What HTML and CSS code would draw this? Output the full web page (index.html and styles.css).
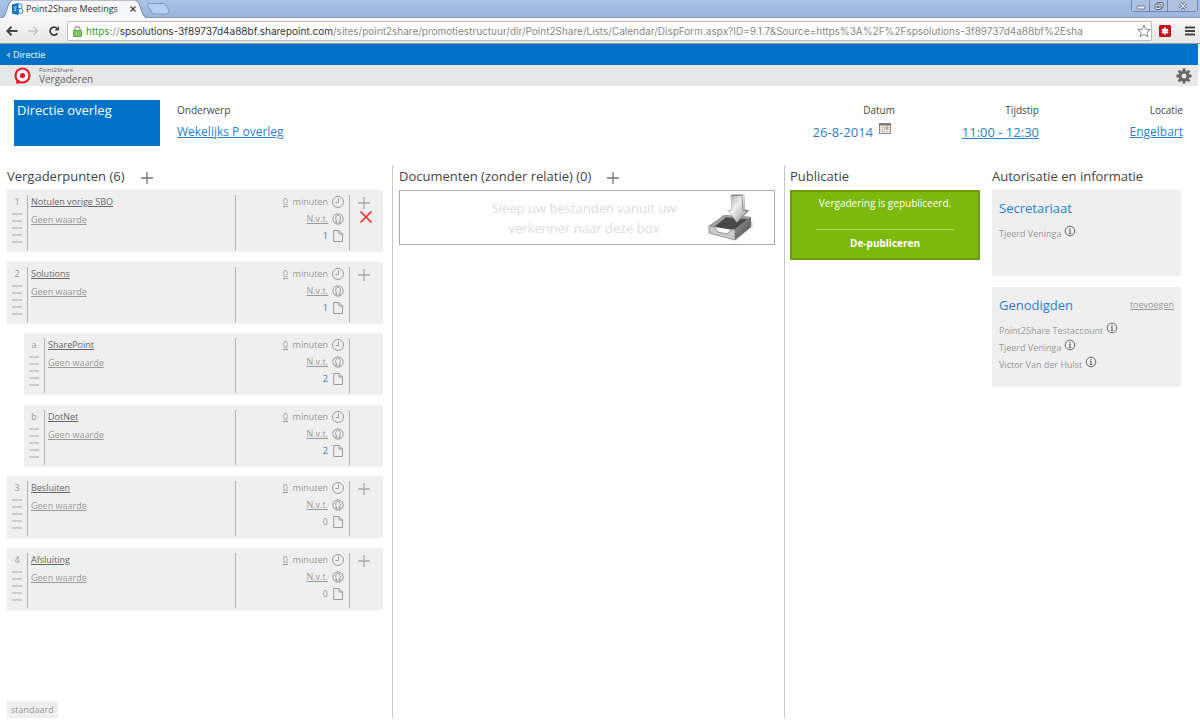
FILE: index.html
```html
<!DOCTYPE html>
<html lang="nl">
<head>
<meta charset="utf-8">
<title>Point2Share Meetings</title>
<link rel="stylesheet" href="styles.css">
</head>
<body>
<svg class="defs" aria-hidden="true">
  <symbol id="plus" viewBox="0 0 12 12"><path d="M6 0v12M0 6h12" fill="none" stroke="currentColor" stroke-width="1.3"/></symbol>
  <symbol id="cross" viewBox="0 0 12 12"><path d="M.5.5l11 11M11.5.5l-11 11" fill="none" stroke="currentColor" stroke-width="1.5"/></symbol>
  <symbol id="clock" viewBox="0 0 12 12"><g fill="none" stroke="currentColor" stroke-width=".9"><circle cx="6" cy="6" r="5.5"/><path d="M6.5 2.5v4H3.5"/></g></symbol>
  <symbol id="person" viewBox="0 0 12 12"><g fill="none" stroke="currentColor" stroke-width=".9"><circle cx="6" cy="6" r="5.2"/><path d="M2.8 9.8c0-1 1.5-1.3 1.7-2C3.300 6.500 3.200 2.300 6 2.300s2.700 4.200 1.500 5.500c.2.700 1.700 1 1.700 2M4.700 8v2.800M7.300 8v2.800"/></g></symbol>
  <symbol id="doc" viewBox="0 0 12 12"><path d="M1.700.5h5.300l3.500 3.500v7.500H1.700zM7 .5V4h3.500" fill="none" stroke="currentColor" stroke-width=".9"/></symbol>
  <symbol id="info" viewBox="0 0 12 12"><circle cx="6" cy="6" r="4.800" fill="none" stroke="currentColor"/><path d="M6 3v1.300M5 5.300h1v3.200M4.800 8.500h2.500" fill="none" stroke="currentColor" stroke-width="1.100"/></symbol>
  <symbol id="grip" viewBox="0 0 10 30"><path d="M0 1h10M0 8h10M0 15h10M0 22h10M0 29h10" fill="none" stroke="currentColor" stroke-width="1.200"/></symbol>
</svg>

<header class="browser">
  <div class="tabs">
    <div class="tab">
      <svg class="tab-shape" viewBox="0 0 146 18" preserveAspectRatio="none"><path d="M0 18C5 17 5 1 11 0H135C141 1 141 17 147 18" fill="#f6f7f9" stroke="#7185a8"/></svg>
      <svg class="favicon" viewBox="0 0 12 12"><circle cx="7.500" cy="3.300" r="2.600" fill="none" stroke="#2a86cc"/><circle cx="8.500" cy="8" r="2.500" fill="none" stroke="#2a86cc"/><path d="M0 1.500L6.500 0v12L0 10.500z" fill="#0f6fbd"/><path d="M4.600 4C3 3.100 1.900 4.400 3 5.500S4.500 8 2 7.800" stroke="#fff" fill="none"/></svg>
      <span class="tab-title">Point2Share Meetings</span>
      <button class="tab-close" aria-label="Sluiten"><svg viewBox="0 0 6 6"><path d="M.5.5l5 5M5.500.5l-5 5" stroke="#444" stroke-width="1.300"/></svg></button>
    </div>
    <button class="new-tab" aria-label="Nieuw tabblad"><svg viewBox="0 0 24 12"><path d="M3 .5H18q2 0 3 3l2 5q.5 2.500-2 2.500H8q-2 0-3-3L1.500 2.500Q1 .5 3 .5z" fill="#b6cdec" stroke="#7d99c4"/></svg></button>
    <div class="window-buttons">
      <button aria-label="Minimaliseren"><svg viewBox="0 0 10 8"><rect x="1" y="4" width="8" height="3" rx="1" fill="#eef3fa" stroke="#5a6883" stroke-width=".8"/></svg></button>
      <button aria-label="Herstellen"><svg viewBox="0 0 10 8"><g fill="#dfe8f5" stroke="#4b5872" stroke-width=".9"><rect x="3" y=".5" width="6" height="5.500" rx="1"/><rect x="1" y="2" width="6" height="5.500" rx="1"/><rect x="3" y="4" width="2" height="1.500"/></g></svg></button>
      <button class="wide" aria-label="Sluiten"><svg viewBox="0 0 10 8"><path d="M2 1l6 6M8 1L2 7" stroke="#54617b" stroke-width="3"/><path d="M2 1l6 6M8 1L2 7" stroke="#e8eef8" stroke-width="1.300"/></svg></button>
    </div>
  </div>
  <div class="toolbar">
    <button class="nav" aria-label="Terug"><svg viewBox="0 0 12 10"><path d="M1 5h10.500M5.500.8L1.300 5l4.200 4.200" fill="none" stroke="#444" stroke-width="2"/></svg></button>
    <button class="nav" aria-label="Vooruit"><svg viewBox="0 0 12 10"><path d="M1 5h9.500M6.500 1l4 4-4 4" fill="none" stroke="#c6c6c6" stroke-width="1.600"/></svg></button>
    <button class="nav" aria-label="Vernieuwen"><svg viewBox="0 0 12 10"><path d="M9.500 7.200A4 4 0 1 1 9 2.300" fill="none" stroke="#444" stroke-width="1.800"/><path d="M11 0v4.500H6.500z" fill="#444"/></svg></button>
    <div class="address">
      <svg class="lock" viewBox="0 0 9 11"><path d="M2 5V3a2.500 2.500 0 0 1 5 0v2" fill="none" stroke="#9a9a9a" stroke-width="1.300"/><rect x=".5" y="4.500" width="8" height="6" rx=".6" fill="#7fc763" stroke="#56a63e"/></svg>
      <div class="url" role="textbox" aria-label="Adres" tabindex="0"><span class="scheme">https:</span>//<span class="host">spsolutions-3f89737d4a88bf.sharepoint.com</span>/sites/point2share/promotiestructuur/dir/Point2Share/Lists/Calendar/DispForm.aspx?ID=9.1.7&amp;Source=https%3A%2F%2Fspsolutions-3f89737d4a88bf%2Esha</div>
      <button class="star" aria-label="Bladwijzer"><svg viewBox="0 0 14 14"><path d="M7 1l1.700 4.200 4.600.3-3.500 2.900 1.200 4.400L7 10.400l-4 2.400 1.200-4.400L.7 5.500l4.600-.3z" fill="#fff" stroke="#888"/></svg></button>
    </div>
    <button class="ext" aria-label="Extensie"><svg viewBox="0 0 12 12"><rect width="12" height="12" rx="1.500" fill="#c2121f"/><path d="M6 2.500v7M2.900 4.300l6.200 3.500M9.100 4.300L2.900 7.800" stroke="#fff" stroke-width="1.900"/></svg></button>
    <button class="menu" aria-label="Menu"><svg viewBox="0 0 10 10"><path d="M0 1.500h10M0 5h10M0 8.500h10" stroke="#444" stroke-width="2"/></svg></button>
  </div>
</header>

<nav class="suite-bar"><a href="#"><svg viewBox="0 0 4 6"><path d="M4 0v6L0 3z" fill="#8fb0cf"/></svg>Directie</a></nav>

<div class="app-bar">
  <svg class="logo" viewBox="0 0 17 17"><path d="M2 16.500l.6-4.500 4 4.500z" fill="#ea1c2c"/><circle cx="8.500" cy="8.500" r="7" fill="#fff" stroke="#ea1c2c" stroke-width="2.200"/><circle cx="8.500" cy="8.500" r="2.600" fill="#ea1c2c"/></svg>
  <div class="app-name"><small>Point2Share</small><span>Vergaderen</span></div>
  <button class="gear" aria-label="Instellingen"><svg viewBox="0 0 16 16"><g stroke="#666" stroke-width="3"><path d="M8 .5v3.500M8 12v3.500M.5 8h3.500M12 8h3.500M2.700 2.700l2.500 2.500M10.800 10.800l2.500 2.500M13.300 2.700l-2.500 2.500M5.200 10.800l-2.500 2.500"/></g><circle cx="8" cy="8" r="3.900" fill="none" stroke="#666" stroke-width="2.800"/></svg></button>
</div>

<main class="page">
  <section class="meeting">
    <h1>Directie overleg</h1>
    <dl class="subject"><dt>Onderwerp</dt><dd><a href="#">Wekelijks P overleg</a></dd></dl>
    <dl class="fact"><dt>Datum</dt><dd class="date numeric">26-8-2014<svg viewBox="0 0 12 11"><rect x=".5" y=".5" width="11" height="10" fill="#f4f4f4" stroke="#8a8a8a"/><path d="M0 1.500h12" stroke="#777" stroke-width="2"/><path d="M1 4.500h10M1 6.500h10M1 8.500h10M3.500 3v7M5.500 3v7M8.500 3v7" stroke="#c4c4c4" stroke-width=".7"/><circle cx="8" cy="5" r="1.800" fill="#f2a060"/></svg></dd></dl>
    <dl class="fact"><dt>Tijdstip</dt><dd class="numeric"><a href="#">11:00 - 12:30</a></dd></dl>
    <dl class="fact"><dt>Locatie</dt><dd><a href="#">Engelbart</a></dd></dl>
  </section>

  <div class="columns">
    <section class="column agenda">
      <h2>Vergaderpunten (6)<button class="add" aria-label="Toevoegen"><svg><use href="#plus"/></svg></button></h2>
      <ol class="items">
        <li><article class="item">
          <div class="handle"><span>1</span><svg><use href="#grip"/></svg></div>
          <div class="text"><a class="title" href="#">Notulen vorige SBO</a><a href="#">Geen waarde</a></div>
          <div class="meta"><span><a href="#">0</a>&nbsp; minuten</span><svg><use href="#clock"/></svg><a href="#">N.v.t.</a><svg><use href="#person"/></svg><b>1</b><svg><use href="#doc"/></svg></div>
          <div class="actions"><button aria-label="Toevoegen"><svg><use href="#plus"/></svg></button><button class="remove" aria-label="Verwijderen"><svg><use href="#cross"/></svg></button></div>
        </article></li>
        <li><article class="item">
          <div class="handle"><span>2</span><svg><use href="#grip"/></svg></div>
          <div class="text"><a class="title" href="#">Solutions</a><a href="#">Geen waarde</a></div>
          <div class="meta"><span><a href="#">0</a>&nbsp; minuten</span><svg><use href="#clock"/></svg><a href="#">N.v.t.</a><svg><use href="#person"/></svg><b>1</b><svg><use href="#doc"/></svg></div>
          <div class="actions"><button aria-label="Toevoegen"><svg><use href="#plus"/></svg></button></div>
        </article>
          <ol class="items nested">
            <li><article class="item">
              <div class="handle"><span>a</span><svg><use href="#grip"/></svg></div>
              <div class="text"><a class="title" href="#">SharePoint</a><a href="#">Geen waarde</a></div>
              <div class="meta"><span><a href="#">0</a>&nbsp; minuten</span><svg><use href="#clock"/></svg><a href="#">N.v.t.</a><svg><use href="#person"/></svg><b>2</b><svg><use href="#doc"/></svg></div>
              <div class="actions"></div>
            </article></li>
            <li><article class="item">
              <div class="handle"><span>b</span><svg><use href="#grip"/></svg></div>
              <div class="text"><a class="title" href="#">DotNet</a><a href="#">Geen waarde</a></div>
              <div class="meta"><span><a href="#">0</a>&nbsp; minuten</span><svg><use href="#clock"/></svg><a href="#">N.v.t.</a><svg><use href="#person"/></svg><b>2</b><svg><use href="#doc"/></svg></div>
              <div class="actions"></div>
            </article></li>
          </ol>
        </li>
        <li><article class="item">
          <div class="handle"><span>3</span><svg><use href="#grip"/></svg></div>
          <div class="text"><a class="title" href="#">Besluiten</a><a href="#">Geen waarde</a></div>
          <div class="meta"><span><a href="#">0</a>&nbsp; minuten</span><svg><use href="#clock"/></svg><a href="#">N.v.t.</a><svg><use href="#person"/></svg><span>0</span><svg><use href="#doc"/></svg></div>
          <div class="actions"><button aria-label="Toevoegen"><svg><use href="#plus"/></svg></button></div>
        </article></li>
        <li><article class="item">
          <div class="handle"><span>4</span><svg><use href="#grip"/></svg></div>
          <div class="text"><a class="title" href="#">Afsluiting</a><a href="#">Geen waarde</a></div>
          <div class="meta"><span><a href="#">0</a>&nbsp; minuten</span><svg><use href="#clock"/></svg><a href="#">N.v.t.</a><svg><use href="#person"/></svg><span>0</span><svg><use href="#doc"/></svg></div>
          <div class="actions"><button aria-label="Toevoegen"><svg><use href="#plus"/></svg></button></div>
        </article></li>
      </ol>
      <button class="standard">standaard</button>
    </section>

    <section class="column documents">
      <h2>Documenten (zonder relatie) (0)<button class="add" aria-label="Toevoegen"><svg><use href="#plus"/></svg></button></h2>
      <div class="dropzone">
        <p>Sleep uw bestanden vanuit uw verkenner naar deze box</p>
        <svg viewBox="0 0 46 48">
          <defs>
            <linearGradient id="arrow" x1="0" x2="1" y2="1"><stop stop-color="#999"/><stop offset=".4" stop-color="#f0f0f0"/><stop offset="1" stop-color="#8a8a8a"/></linearGradient>
            <linearGradient id="side" x2="1" y2="1"><stop stop-color="#999"/><stop offset="1" stop-color="#4a4a4a"/></linearGradient>
          </defs>
          <path d="M28 47l17-15-1-5-17 14z" fill="#d4d4d4"/>
          <path d="M1 32l15-11 27 2-14 12z" fill="#606060"/>
          <path d="M7 33l11-9 20 2-12 10z" fill="#484848"/>
          <path d="M1 32l15-11 27 2-2 2-23-2-11 9z" fill="#a0a0a0"/>
          <path d="M27 35l16-12v10L27 46z" fill="url(#side)"/>
          <path d="M1 32l6 1 3 5 9 2 4-4 4-1v11L1 39z" fill="#c9c9c9" stroke="#777" stroke-width=".7"/>
          <path d="M23 1.500L25 .5h11l1 15 4 1-12 12-9-12 4-1z" fill="url(#arrow)" stroke="#999" stroke-width=".5"/>
          <path d="M23 1.500h11l1 15h5L29 28" fill="none" stroke="#777" stroke-width=".8"/>
        </svg>
      </div>
    </section>

    <div class="side">
      <section>
        <h2>Publicatie</h2>
        <div class="published"><p>Vergadering is gepubliceerd.</p><button>De-publiceren</button></div>
      </section>
      <section class="info">
        <h2>Autorisatie en informatie</h2>
        <div class="panel">
          <h3>Secretariaat</h3>
          <ul><li>Tjeerd Veninga<svg><use href="#info"/></svg></li></ul>
        </div>
        <div class="panel">
          <h3>Genodigden<a href="#">toevoegen</a></h3>
          <ul><li>Point2Share Testaccount<svg><use href="#info"/></svg></li><li>Tjeerd Veninga<svg><use href="#info"/></svg></li><li>Victor Van der Hulst<svg><use href="#info"/></svg></li></ul>
        </div>
      </section>
    </div>
  </div>
</main>
</body>
</html>
```
FILE: styles.css
```css
* { box-sizing: border-box; }
html, body { height: 100%; }
body {
  margin: 0;
  display: flex;
  flex-direction: column;
  background: #fff;
  color: #444;
  font: 9px/16px "Open Sans", "Noto Sans", sans-serif;
}
h1, h2, h3, p, dl, dd, ol, ul { margin: 0; padding: 0; font-weight: 400; list-style: none; }
button { padding: 0; border: 0; background: none; font: inherit; color: inherit; display: flex; align-items: center; justify-content: center; }
svg { display: block; flex: none; }
a { color: inherit; }
.defs { position: absolute; width: 0; height: 0; }

/* browser frame */
.browser { border-bottom: 1px solid #8f98a3; }
.tabs { display: flex; height: 18px; padding-left: 2px; background: linear-gradient(#a8c3e6, #9cb6de); border-bottom: 1px solid #8496b5; }
.tab { position: relative; display: flex; align-items: center; width: 144px; height: 18px; padding-left: 10px; color: #333; }
.tab-shape { position: absolute; left: 0; top: 0; width: 100%; height: 100%; }
.favicon { position: relative; width: 12px; height: 12px; }
.tab-title { position: relative; flex: 1; padding-left: 2px; }
.tab-close { position: relative; width: 6px; height: 6px; margin-right: 10px; }
.tab-close svg { width: 6px; height: 6px; }
.new-tab { width: 24px; height: 18px; }
.new-tab svg { width: 24px; height: 12px; }
.window-buttons { display: flex; height: 12px; margin-left: auto; margin-right: 2px; border: 1px solid #7486a8; border-top: 0; border-radius: 0 0 3px 3px; }
.window-buttons button { width: 18px; border-right: 1px solid #7486a8; background: #adc2e1; }
.window-buttons .wide { width: 29px; border: 0; }
.window-buttons svg { width: 10px; height: 8px; }
.toolbar { display: flex; align-items: center; gap: 9px; height: 25px; padding: 3px 5px 2px 6px; background: linear-gradient(#f8f8f8, #e6e6e6); }
.nav svg { width: 12px; height: 10px; }
.address { flex: 1; min-width: 0; display: flex; align-items: center; height: 20px; margin-left: -2px; margin-right: -2px; padding-left: 5px; background: #fff; border: 1px solid #bcbcbc; border-radius: 2px; }
.lock { width: 9px; height: 11px; margin-right: 4px; }
.url { flex: 1; min-width: 0; overflow: hidden; white-space: nowrap; font-family: Inter, "Open Sans", sans-serif; font-size: 10px; color: #888; }
.scheme { color: #3a9a35; }
.host { color: #333; }
.star svg { width: 14px; height: 14px; }
.star { margin-right: 0; }
.ext svg { width: 12px; height: 12px; }
.menu { margin-left: 5px; }
.menu svg { width: 10px; height: 10px; }

/* site bars */
.suite-bar { height: 21px; margin-right: 2px; padding: 3px 6px; background: #0072c6; color: #fff; }
.suite-bar a { display: inline-flex; align-items: center; gap: 3px; text-decoration: none; }
.suite-bar svg { width: 4px; height: 6px; }
.app-bar { display: flex; align-items: center; height: 21px; margin-right: 2px; padding: 0 6px 0 14px; background: #e6e7e9; color: #666; }
.logo { width: 17px; height: 17px; margin-right: 8px; }
.app-name { display: grid; }
.app-name small { font-size: 6px; line-height: 7px; }
.app-name span { font-size: 10px; line-height: 10px; }
.gear { margin-left: auto; }
.gear svg { width: 16px; height: 16px; }

/* meeting summary */
.page { flex: 1; display: flex; flex-direction: column; padding: 14px 0 4px; }
.meeting { display: flex; padding: 0 17px 0 14px; }
.meeting h1 { width: 146px; height: 46px; padding: 1px 3px; background: #0072c6; color: #fff; font-size: 13px; line-height: 18px; }
.meeting dt { font-size: 10px; line-height: 20px; }
.meeting dd { font-size: 12px; line-height: 24px; color: #2a7fcb; }
.meeting .numeric { font-size: 13px; }
.subject { flex: 1; padding-left: 17px; }
.fact { width: 144px; text-align: right; }
.date { display: flex; justify-content: flex-end; gap: 6px; padding-right: 4px; }
.date svg { width: 12px; height: 11px; margin-top: 3px; }

/* columns */
.columns { flex: 1; display: grid; grid-template-columns: 393fr 392fr 415fr; margin-top: 19px; }
.column { display: flex; flex-direction: column; border-right: 1px solid #c8c8c8; }
.agenda { padding: 0 9px 0 7px; }
.documents { padding: 0 9px 0 6px; }
h2 { display: flex; align-items: center; height: 25px; padding-bottom: 4px; font-size: 13px; }
.add { margin-left: 16px; padding-top: 4px; color: #777; }
.add svg { width: 12px; height: 12px; }
.items { display: grid; gap: 10px; }
.nested { margin: 9px 0 -1px 17px; }
.item { display: flex; min-height: 62px; padding: 5px 0 2px; background: #efefef; color: #999; line-height: 14px; }
.item > div { border-right: 1px solid #b0b0b0; }
.item .handle { display: grid; justify-items: center; align-content: start; width: 21px; }
.handle svg { width: 10px; height: 30px; margin-top: 4px; color: #aaa; }
.text { flex: 1; display: grid; align-content: start; justify-items: start; row-gap: 4px; padding-left: 3px; }
.title { color: #666; }
.meta { display: grid; grid-template-columns: 1fr 12px; gap: 3px 4px; align-content: start; align-items: center; justify-items: end; width: 114px; padding-right: 5px; }
.meta svg { width: 12px; height: 12px; color: #8b9499; }
.meta b { font-weight: 400; color: #2a7fcb; }
.item .actions { display: grid; justify-items: center; align-content: start; gap: 2px; width: 33px; padding: 2px 5px 0 0; border: 0; color: #aaa; }
.actions svg { width: 12px; height: 12px; }
.actions .remove { margin-left: 4px; color: #e22; }
.standard { align-self: flex-start; margin-top: auto; height: 17px; padding: 0 4px; background: #efefef; color: #999; }

.dropzone { display: flex; align-items: center; height: 55px; padding: 3px 20px 3px 60px; border: 1px solid #aaa; }
.dropzone p { flex: 1; padding: 0 20px; text-align: center; font-size: 13px; line-height: 20px; color: #ddd; }
.dropzone svg { width: 46px; height: 48px; }

.side { display: grid; grid-template-columns: 190fr 189fr; gap: 12px; padding: 0 19px 0 5px; }
.published { height: 70px; padding: 3px 24px; background: #7db80d; border: 2px solid #6a9c0c; color: #fff; text-align: center; font-size: 10px; }
.published p { height: 35px; border-bottom: 1px solid #b5d86f; white-space: nowrap; }
.published button { width: 100%; padding-top: 5px; font-weight: 700; }
.info { display: flex; flex-direction: column; }
.panel { min-height: 86px; margin-bottom: 11px; padding: 9px 7px 14px; background: #efefef; color: #999; }
h3 { display: flex; align-items: center; justify-content: space-between; font-size: 13px; line-height: 18px; color: #2a7fcb; }
h3 a { font-size: 9px; color: #999; }
.panel ul { padding-top: 8px; }
.panel li { display: flex; gap: 3px; line-height: 17px; }
.panel li svg { width: 12px; height: 12px; color: #666; }
```
